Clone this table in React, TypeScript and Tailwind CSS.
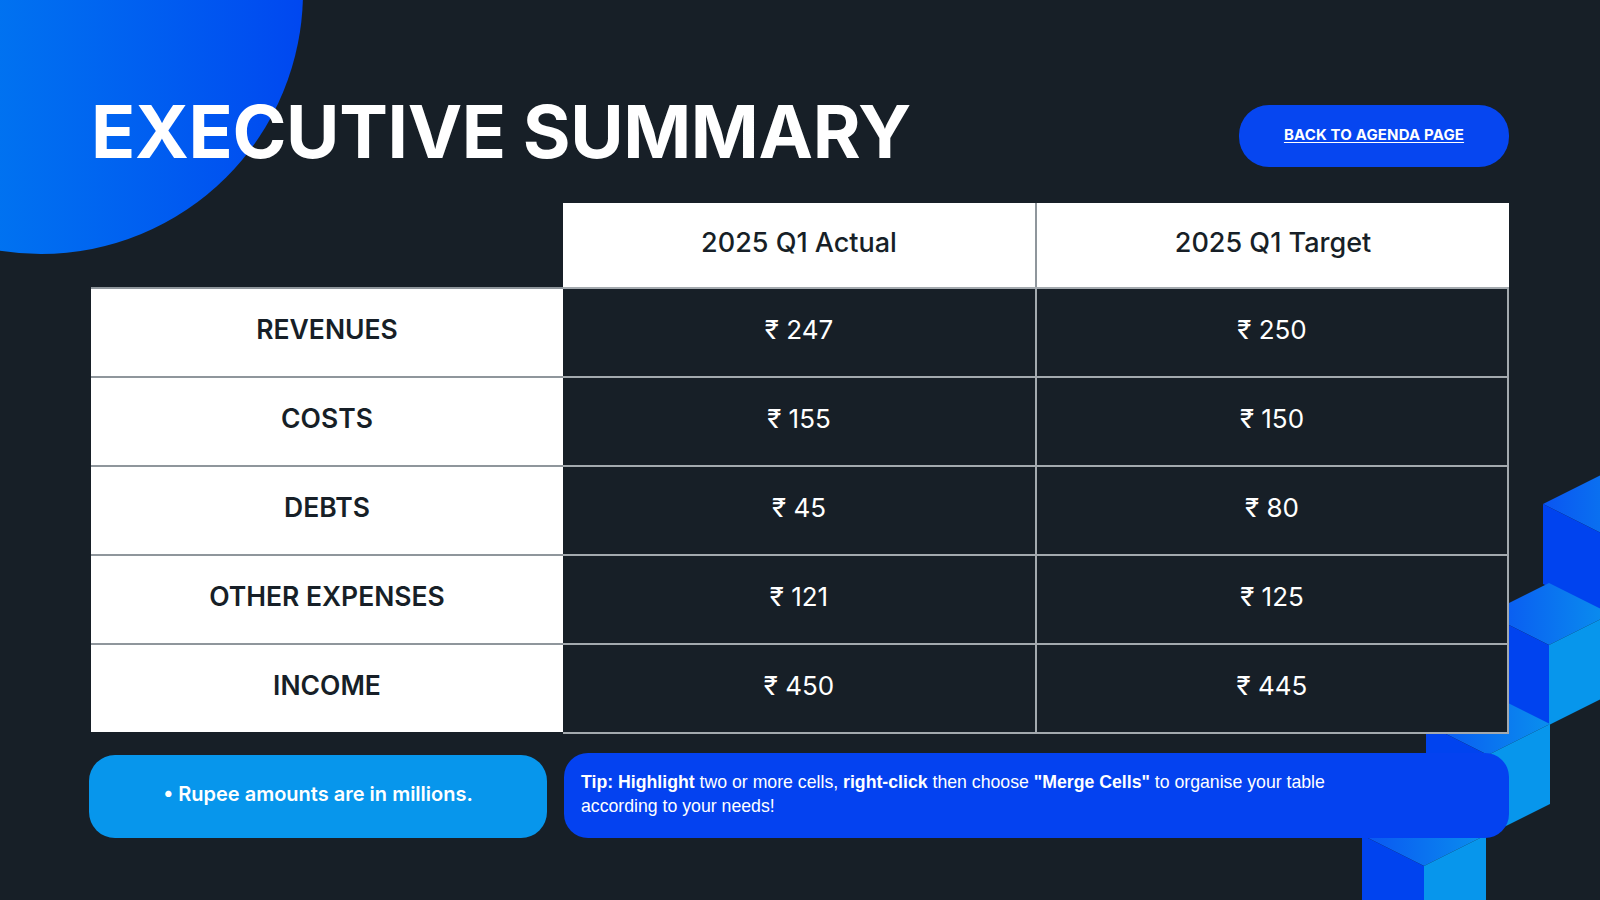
import React from 'react';

const filas = [
  { etiqueta: 'REVENUES', actual: '247', meta: '250' },
  { etiqueta: 'COSTS', actual: '155', meta: '150' },
  { etiqueta: 'DEBTS', actual: '45', meta: '80' },
  { etiqueta: 'OTHER EXPENSES', actual: '121', meta: '125' },
  { etiqueta: 'INCOME', actual: '450', meta: '445' },
];

// centro de cada cubo (vértice donde se juntan las tres caras)
const cubos = [
  { x: 1605, y: 535 },
  { x: 1549, y: 645 },
  { x: 1488, y: 755 },
  { x: 1424, y: 866 },
];

const Cubos = () => {
  const a = 62;
  const h = 80;
  return (
    <svg
      className="absolute left-[1300px] top-[440px]"
      width="300"
      height="460"
      viewBox="1300 440 300 460"
    >
      <defs>
        <linearGradient id="caraSuperior" x1="0" y1="0" x2="1" y2="0">
          <stop offset="0" stopColor="#0a55f2" />
          <stop offset="1" stopColor="#0a8fee" />
        </linearGradient>
      </defs>
      {cubos.map((c, i) => (
        <g key={i}>
          <polygon
            points={`${c.x},${c.y} ${c.x - a},${c.y - a / 2} ${c.x},${c.y - a} ${c.x + a},${c.y - a / 2}`}
            fill="url(#caraSuperior)"
          />
          <polygon
            points={`${c.x},${c.y} ${c.x - a},${c.y - a / 2} ${c.x - a},${c.y - a / 2 + h} ${c.x},${c.y + h}`}
            fill="#0043ef"
          />
          <polygon
            points={`${c.x},${c.y} ${c.x + a},${c.y - a / 2} ${c.x + a},${c.y - a / 2 + h} ${c.x},${c.y + h}`}
            fill="#0796ec"
          />
        </g>
      ))}
    </svg>
  );
};

export default function App() {
  const geo = { fontFamily: 'Inter, "Noto Sans", sans-serif' };
  return (
    <div className="relative w-[1600px] h-[900px] overflow-hidden bg-[#171f27]" style={geo}>
      <div className="absolute left-[-221px] top-[-270px] w-[524px] h-[524px] rounded-full bg-gradient-to-r from-[#0a8cf0] to-[#0047f0]" />
      <Cubos />

      <div className="relative flex flex-col pl-[91px] pr-[91px]">
        <div className="flex items-center justify-between pt-[93px] h-[180px]">
          <h1 className="text-[73px] font-bold leading-none tracking-[-0.005em] text-white -mt-[10px]">
            EXECUTIVE SUMMARY
          </h1>
          <div className="flex items-center justify-center w-[270px] h-[62px] rounded-[30px] bg-[#0646f0] -mt-[2px]">
            <span className="text-[15px] font-bold tracking-[0.01em] text-white underline underline-offset-2">
              BACK TO AGENDA PAGE
            </span>
          </div>
        </div>

        <div className="mt-[23px]">
          <div className="grid grid-cols-[472px_474px_472px]">
            <div />
            <div className="h-[84px] flex items-center justify-center pb-[4px] bg-white text-[27px] font-medium text-[#171f27] border-r-2 border-[#8f969c]">
              2025 Q1 Actual
            </div>
            <div className="h-[84px] flex items-center justify-center pb-[4px] bg-white text-[27px] font-medium text-[#171f27]">
              2025 Q1 Target
            </div>
            {filas.map((f) => (
              <React.Fragment key={f.etiqueta}>
                <div className="h-[89px] flex items-center justify-center pb-[6px] bg-white text-[26.5px] font-semibold text-[#171f27] border-t-2 border-[#8f969c]">
                  {f.etiqueta}
                </div>
                <div className="h-[89px] flex items-center justify-center pb-[6px] bg-[#171f27] text-[26px] text-white border-t-2 border-r-2 border-[#a3a9ae]">
                  ₹ {f.actual}
                </div>
                <div className="h-[89px] flex items-center justify-center pb-[6px] bg-[#171f27] text-[26px] text-white border-t-2 border-r-2 border-[#a3a9ae]">
                  ₹ {f.meta}
                </div>
              </React.Fragment>
            ))}
          </div>
          <div className="h-[2px] bg-[#a3a9ae] ml-[472px]" />
          <div className="h-[19px] w-[1327px] bg-[#171f27]" />
        </div>

        <div className="flex items-end gap-[17px] -ml-[2px]">
          <div className="flex items-center justify-center w-[458px] h-[83px] pb-[5px] rounded-[26px] bg-[#0796ec] text-[20px] font-semibold text-white">
            • Rupee amounts are in millions.
          </div>
          <div
            className="flex items-center w-[945px] h-[85px] pb-[3px] rounded-[24px] bg-[#0442f0] px-[17px] text-[17.7px] leading-[24px] text-white"
            style={{ fontFamily: '"Liberation Sans", Arial, sans-serif' }}
          >
            <p>
              <b>Tip: Highlight</b> two or more cells, <b>right-click</b> then choose <b>"Merge Cells"</b> to organise
              your table
              <br />
              according to your needs!
            </p>
          </div>
        </div>
      </div>
    </div>
  );
}
